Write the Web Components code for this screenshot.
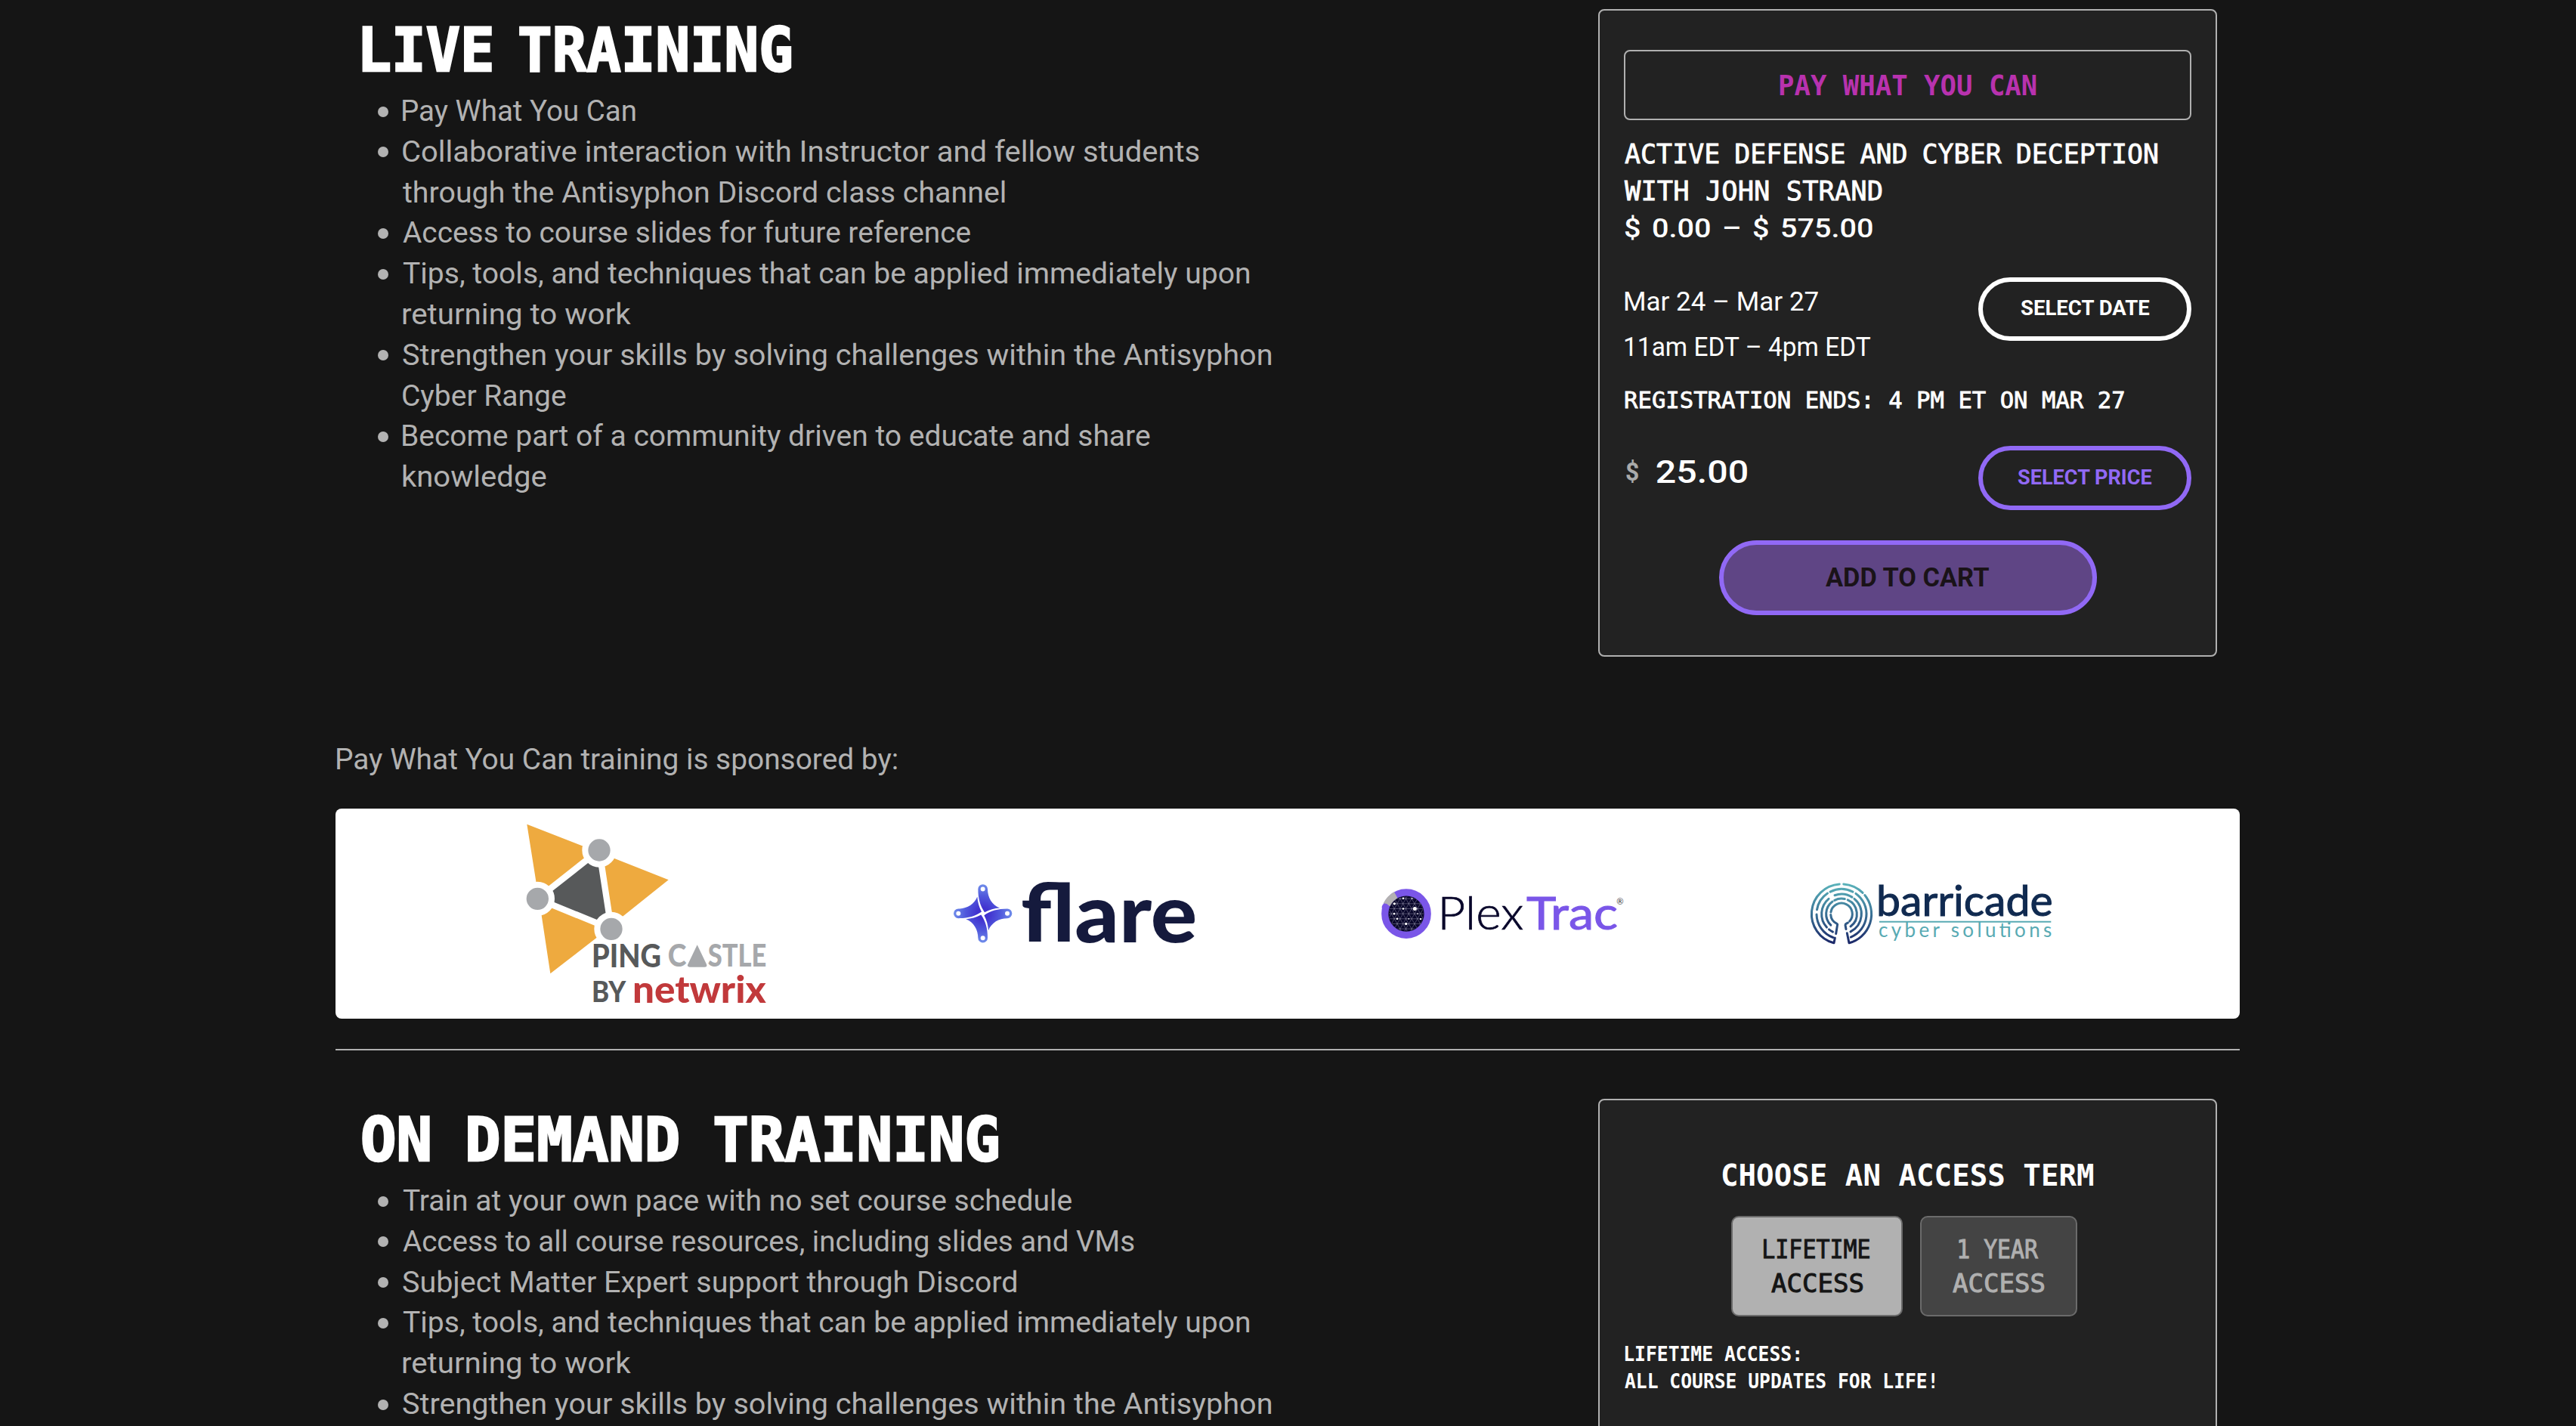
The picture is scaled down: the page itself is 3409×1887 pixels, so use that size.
<!DOCTYPE html>
<html lang="en">
<head>
<meta charset="utf-8">
<title>Active Defense and Cyber Deception</title>
<style>
  html, body { margin: 0; background: #151515; }
  body { height: 1887px; overflow: hidden; font-family: Roboto, "Liberation Sans", sans-serif; color: #b2b2b2; }
</style>
</head>
<body>
<training-page></training-page>

<script>
const FACES = {
  mono: { family: '"DejaVu Sans Mono", "Liberation Mono", monospace', cap: 0.729 },
  body: { family: 'Roboto, "Liberation Sans", sans-serif', cap: 0.711 }
};
const pen = document.createElement('canvas').getContext('2d');

/* One line of text set to an exact cap height and ink width. */
class FitText extends HTMLElement {
  connectedCallback() {
    const get = (n, d) => this.getAttribute(n) ?? d;
    const face = FACES[get('face', 'body')];
    const size = +get('cap', 27) / face.cap;
    const weight = get('weight', 400);
    const width = +get('w', 100);
    const text = this.textContent.trim();
    const gap = +get('gap', 0) * size;
    const spaces = text.split(' ').length - 1;
    pen.font = `${weight} ${size}px ${face.family}`;
    const m = pen.measureText(text);
    const scale = width / (m.actualBoundingBoxLeft + m.actualBoundingBoxRight + gap * spaces);
    const shift = m.actualBoundingBoxLeft * scale;
    this.attachShadow({ mode: 'open' }).innerHTML = `
      <style>
        :host { display: block; flex: none; width: ${width}px; height: ${get('h', 54)}px; line-height: ${get('h', 54)}px; }
        span { display: inline-block; white-space: pre; font: ${weight} ${size}px/${get('h', 54)}px ${face.family};
          word-spacing: ${gap}px; transform: translate(${shift}px, 1px) scaleX(${scale}); transform-origin: 0 50%; vertical-align: top;
          -webkit-text-stroke: ${get('stroke', 0)}px currentColor; }
      </style><span><slot></slot></span>`;
  }
}
customElements.define('fit-text', FitText);

class PillButton extends HTMLElement {
  connectedCallback() {
    this.attachShadow({ mode: 'open' }).innerHTML = `
      <style>
        :host { display: block; flex: none; }
        button { box-sizing: border-box; width: 100%; height: 100%; margin: 0; padding: 0 0 3px; display: flex; align-items: center; justify-content: center;
          border: 6px solid var(--line, #fff); border-radius: 60px; background: var(--fill, transparent); color: var(--ink, #fff); }
      </style><button><slot></slot></button>`;
  }
}
customElements.define('pill-button', PillButton);

class TermOption extends HTMLElement {
  connectedCallback() {
    this.attachShadow({ mode: 'open' }).innerHTML = `
      <style>
        :host { display: flex; box-sizing: border-box; height: 133px; flex-direction: column; align-items: center; justify-content: center;
          border: 2px solid #6b6b6b; border-radius: 10px; background: #444; color: #b0b0b0; }
        :host([selected]) { background: #b1b1b1; color: #151515; }
      </style><slot></slot>`;
  }
}
customElements.define('term-option', TermOption);

class OfferCard extends HTMLElement {
  connectedCallback() {
    this.attachShadow({ mode: 'open' }).innerHTML = `
      <style>
        :host { display: block; box-sizing: border-box; width: 819px; height: 857px; flex: none; padding: 0 32px;
          border: 2px solid #b0b0b0; border-radius: 8px; background: #222; color: #fff; }
      </style><slot></slot>`;
  }
}
customElements.define('offer-card', OfferCard);

/* Item whose light-DOM lines stack beside a round bullet. */
class BulletItem extends HTMLElement {
  connectedCallback() {
    this.attachShadow({ mode: 'open' }).innerHTML = `
      <style>
        :host { display: flex; color: #b2b2b2; }
        i { flex: none; width: 14px; height: 14px; margin: 20.5px 19px 0 19.5px; border-radius: 50%; background: currentColor; }
      </style><i></i><div><slot></slot></div>`;
  }
}
customElements.define('bullet-item', BulletItem);

class TrainingRow extends HTMLElement {
  connectedCallback() {
    this.attachShadow({ mode: 'open' }).innerHTML = `
      <style>
        :host { display: flex; justify-content: space-between; align-items: flex-start; padding: 0 30px 0 36px; }
        .title { margin-top: 12px; color: #fff; }
        .points { margin-top: 12.1px; }
      </style>
      <div><div class="title"><slot name="title"></slot></div><div class="points"><slot></slot></div></div>
      <slot name="card"></slot>`;
  }
}
customElements.define('training-row', TrainingRow);

class PingcastleLogo extends HTMLElement {
  connectedCallback() {
    this.attachShadow({ mode: 'open' }).innerHTML = `
      <style>:host { display: block; } svg { display: block; overflow: visible; } text { font-family: Lato, sans-serif; }</style>
      <svg width="320" height="278" viewBox="99 0 960 834">
        <g fill="#eeaa3f">
          <path d="M109 62L396 174L396 165L151 358L156 358Z"/>
          <path d="M396 165L396 174L671 283L444 464L444 478Z"/>
          <path d="M151 358L157 358L202 655L444 467L444 478Z"/>
        </g>
        <path d="M396 165L151 358L444 478Z" fill="#57595a" stroke="#fff" stroke-width="25"/>
        <g fill="#a6a8ab" stroke="#fff" stroke-width="24">
          <circle cx="396" cy="165" r="56"/><circle cx="151" cy="358" r="56"/><circle cx="444" cy="478" r="56"/>
        </g>
        <text x="366" y="629" font-size="126" font-weight="900" fill="#57595a" textLength="276" lengthAdjust="spacingAndGlyphs">PING</text>
        <g fill="#a6a8ab" font-size="124" font-weight="900">
          <text x="668" y="628" textLength="74" lengthAdjust="spacingAndGlyphs">C</text>
          <path d="M785 541L822 618Q826 629 815 629H755Q743 629 748 618Z"/>
          <text x="827" y="628" textLength="233" lengthAdjust="spacingAndGlyphs">STLE</text>
        </g>
        <text x="366" y="769" font-size="112" font-weight="900" fill="#57595a" textLength="136" lengthAdjust="spacingAndGlyphs">BY</text>
        <text x="528" y="770" font-size="150" font-weight="900" fill="#c1393b" textLength="530" lengthAdjust="spacingAndGlyphs">netwrix</text>
      </svg>`;
  }
}
customElements.define('pingcastle-logo', PingcastleLogo);

class FlareLogo extends HTMLElement {
  connectedCallback() {
    const arm = [0, 90, 180, 270].map(a => `<g transform="rotate(${a} 179 236)">
      <path d="M160 139A19 19 0 0 1 198 139C198 172 215 202 246 214C226 215 204 221 186 231C168 205 160 176 160 139Z"/>
      <circle cx="179" cy="139" r="9" fill="#fff"/></g>`).join('');
    this.attachShadow({ mode: 'open' }).innerHTML = `
      <style>:host { display: block; } svg { display: block; overflow: visible; } text { font-family: Lato, sans-serif; }</style>
      <svg width="320" height="150" viewBox="60 11.6 960 450">
        <defs><radialGradient id="g" gradientUnits="userSpaceOnUse" cx="179" cy="236" r="115">
          <stop offset=".2" stop-color="#4132cf"/><stop offset=".6" stop-color="#5058dc"/><stop offset="1" stop-color="#6f8cea"/></radialGradient></defs>
        <g fill="url(#g)">${arm}</g>
        <text x="330" y="350" font-size="318" font-weight="900" fill="#151a3d" textLength="700" lengthAdjust="spacingAndGlyphs">flare</text>
      </svg>`;
  }
}
customElements.define('flare-logo', FlareLogo);

class PlextracLogo extends HTMLElement {
  connectedCallback() {
    let mesh = '';
    for (let y = 127; y < 290; y += 20) mesh += `M100 ${y}H260`;
    for (let x = -40; x < 400; x += 23) mesh += `M${x} 287L${x + 92} 127M${x} 127L${x + 92} 287`;
    const dots = [[133, 167, 5], [168, 146, 4], [214, 187, 7.5], [168, 187, 4], [132, 207, 4], [144, 227, 4], [179, 247, 5], [237, 228, 3.5], [203, 146, 2.5], [225, 207, 2.5], [190, 227, 2.5]];
    this.attachShadow({ mode: 'open' }).innerHTML = `
      <style>:host { display: block; } svg { display: block; overflow: visible; } text { font-family: Lato, sans-serif; }</style>
      <svg width="320" height="140" viewBox="81 -3.4 960 420">
        <defs><clipPath id="c"><circle cx="180" cy="207" r="69"/></clipPath></defs>
        <circle cx="180" cy="207" r="84" fill="none" stroke="#7a56e8" stroke-width="29"/>
        <path d="M103 171A85 85 0 0 1 139 133" fill="none" stroke="#b3b1b2" stroke-width="29"/>
        <circle cx="97" cy="181" r="14" fill="#7a56e8"/>
        <circle cx="180" cy="207" r="71" fill="#08062a"/>
        <g clip-path="url(#c)"><path d="${mesh}" stroke="#d8d6e8" stroke-width="1" fill="none"/>
        ${dots.map(d => `<circle cx="${d[0]}" cy="${d[1]}" r="${d[2]}" fill="#fff"/>`).join('')}</g>
        <text x="304" y="271" font-size="181" font-weight="300" fill="#08062a" stroke="#08062a" stroke-width="2" textLength="342" lengthAdjust="spacingAndGlyphs">Plex</text>
        <text x="657" y="271" font-size="181" font-weight="400" fill="#7a56e8" stroke="#7a56e8" stroke-width="3" textLength="363" lengthAdjust="spacingAndGlyphs">Trac</text>
        <text x="1015" y="170" font-size="34" fill="#333" textLength="28" lengthAdjust="spacingAndGlyphs">®</text>
      </svg>`;
  }
}
customElements.define('plextrac-logo', PlextracLogo);

class BarricadeLogo extends HTMLElement {
  connectedCallback() {
    const at = (r, a) => [198 + r * Math.sin(a * Math.PI / 180), 208 - r * Math.cos(a * Math.PI / 180)].map(n => n.toFixed(1)).join(' ');
    const arcs = [
      [119, -165, -4], [119, 4, 45], [119, 51, 165],
      [99, -160, -91], [99, -80, -34], [99, -27, 27], [99, 35, 158],
      [79, -154, -141], [79, -132, -40], [79, -20, 32], [79, 40, 153],
      [61, -136, -36], [61, -27, 12], [61, 24, 144],
      [43, -155, -94], [43, -80, 132], [43, 144, 158]
    ].map(([r, a, b]) => `M${at(r, a)}A${r} ${r} 0 ${b - a > 180 ? 1 : 0} 1 ${at(r, b)}`).join('');
    this.attachShadow({ mode: 'open' }).innerHTML = `
      <style>:host { display: block; } svg { display: block; overflow: visible; } text { font-family: Lato, sans-serif; }</style>
      <svg width="320" height="140" viewBox="72 -3.4 960 420">
        <defs><linearGradient id="g" gradientUnits="userSpaceOnUse" x1="0" y1="85" x2="0" y2="325">
          <stop offset="0" stop-color="#5bb4bb"/><stop offset=".5" stop-color="#3a7396"/><stop offset="1" stop-color="#1b2768"/></linearGradient></defs>
        <path d="${arcs}M182 249L176 286M172 303L168 323M213 252L216 268M220 284L228 323" fill="none" stroke="url(#g)" stroke-width="9" stroke-linecap="round"/>
        <text x="336" y="215" font-size="166" font-weight="400" fill="#102a50" stroke="#102a50" stroke-width="3" textLength="701" lengthAdjust="spacingAndGlyphs">barricade</text>
        <path d="M348 239H1030" stroke="#58aab3" stroke-width="6"/>
        <text x="345" y="299" font-size="78" font-weight="400" fill="#58aab3" textLength="688" lengthAdjust="spacing">cyber solutions</text>
      </svg>`;
  }
}
customElements.define('barricade-logo', BarricadeLogo);

class SponsorPanel extends HTMLElement {
  connectedCallback() {
    this.attachShadow({ mode: 'open' }).innerHTML = `
      <style>:host { display: flex; align-items: center; justify-content: center; gap: 247px; height: 278px; border-radius: 8px; background: #fff; }</style>
      <slot></slot>`;
  }
}
customElements.define('sponsor-panel', SponsorPanel);

class TrainingPage extends HTMLElement {
  connectedCallback() {
    const item = (...lines) => `<bullet-item>${lines.map(([t, w]) => `<fit-text h="53.8" cap="27" w="${w}">${t}</fit-text>`).join('')}</bullet-item>`;
    const tips = item(['Tips, tools, and techniques that can be applied immediately upon', 1120.5], ['returning to work', 302.5]);
    const range = item(['Strengthen your skills by solving challenges within the Antisyphon', 1149.5], ['Cyber Range', 215.5]);
    this.attachShadow({ mode: 'open' }).innerHTML = `
      <style>
        :host { display: block; width: 2520px; margin-left: 444px; padding-top: 12px; }
        .banner { display: flex; align-items: center; justify-content: center; box-sizing: border-box; height: 93px; margin-top: 52px; border: 2px solid #b0b0b0; border-radius: 8px; color: #b832ae; }
        .name { margin: 20px 0 0 1px; }
        .line { display: flex; justify-content: space-between; align-items: flex-start; }
        .dates { margin-top: 40.5px; height: 122px; }
        .dates div { margin: 1px 0 0 1px; }
        .ends { margin: 15px 0 1px 2px; }
        .price { margin-top: 37px; height: 85px; }
        .amount { display: flex; gap: 24px; margin: 4px 0 0 3px; }
        .amount fit-text:first-child { color: #aaa; }
        .side { width: 282px; height: 84px; }
        .violet { --line: #9169f5; --ink: #9169f5; height: 85px; }
        .cart { width: 500px; height: 99px; margin: 40px auto 0; --line: #9169f5; --fill: #5f4585; --ink: #1a1318; }
        .sponsored { margin: 108px 0 39px 2px; }
        hr { height: 2px; margin: 40px 0 64px; border: 0; background: #b0b0b0; }
        .choose { display: flex; justify-content: center; margin-top: 68.7px; }
        .terms { display: flex; justify-content: center; gap: 23px; margin: 24.3px 10px 31px 0; }
        .terms term-option:first-child { width: 227px; }
        .terms term-option:last-child { width: 208px; }
        .note { margin-left: 1px; }
      </style>
      <training-row>
        <fit-text slot="title" face="mono" weight="700" cap="58" h="84" w="566" stroke="2.5" gap="-.2">LIVE TRAINING</fit-text>
        ${item(['Pay What You Can', 308])}
        ${item(['Collaborative interaction with Instructor and fellow students', 1053.5], ['through the Antisyphon Discord class channel', 797])}
        ${item(['Access to course slides for future reference', 751])}
        ${tips}${range}
        ${item(['Become part of a community driven to educate and share', 988.5], ['knowledge', 189.5])}
        <offer-card slot="card">
          <div class="banner"><fit-text face="mono" weight="700" cap="27" h="50" w="340">PAY WHAT YOU CAN</fit-text></div>
          <div class="name">
            <fit-text face="mono" cap="25.5" h="49" w="705" stroke=".8" gap="-.06">ACTIVE DEFENSE AND CYBER DECEPTION</fit-text>
            <fit-text face="mono" cap="25.5" h="49" w="340" stroke=".8">WITH JOHN STRAND</fit-text>
            <fit-text weight="500" cap="25.5" h="49" w="328" gap=".12">$ 0.00 – $ 575.00</fit-text>
          </div>
          <div class="line dates">
            <div><fit-text cap="24.3" h="60" w="256">Mar 24 – Mar 27</fit-text><fit-text cap="24.3" h="60" w="326">11am EDT – 4pm EDT</fit-text></div>
            <pill-button class="side"><fit-text weight="700" cap="19.5" h="40" w="171">SELECT DATE</fit-text></pill-button>
          </div>
          <fit-text class="ends" face="mono" cap="22.5" h="49" w="660" stroke=".8">REGISTRATION ENDS: 4 PM ET ON MAR 27</fit-text>
          <div class="line price">
            <div class="amount"><fit-text weight="700" cap="24" h="60" w="16">$</fit-text><fit-text weight="500" cap="30" h="60" w="120">25.00</fit-text></div>
            <pill-button class="side violet"><fit-text weight="700" cap="19.5" h="40" w="178">SELECT PRICE</fit-text></pill-button>
          </div>
          <pill-button class="cart"><fit-text weight="700" cap="24.5" h="50" w="217">ADD TO CART</fit-text></pill-button>
        </offer-card>
      </training-row>
      <fit-text class="sponsored" cap="27" h="54" w="741">Pay What You Can training is sponsored by:</fit-text>
      <sponsor-panel><pingcastle-logo></pingcastle-logo><flare-logo></flare-logo><plextrac-logo></plextrac-logo><barricade-logo></barricade-logo></sponsor-panel>
      <hr>
      <training-row>
        <fit-text slot="title" face="mono" weight="700" cap="58" h="84" w="840" stroke="2.5" gap="-.06">ON DEMAND TRAINING</fit-text>
        ${item(['Train at your own pace with no set course schedule', 885])}
        ${item(['Access to all course resources, including slides and VMs', 967.5])}
        ${item(['Subject Matter Expert support through Discord', 812])}
        ${tips}
        ${item(['Strengthen your skills by solving challenges within the Antisyphon', 1149.5])}
        <offer-card slot="card">
          <div class="choose"><fit-text face="mono" weight="700" cap="28.5" h="60" w="491">CHOOSE AN ACCESS TERM</fit-text></div>
          <div class="terms">
            <term-option selected><fit-text face="mono" cap="24" h="45" w="140" stroke="1">LIFETIME</fit-text><fit-text face="mono" cap="24" h="45" w="121" stroke="1">ACCESS</fit-text></term-option>
            <term-option><fit-text face="mono" cap="24" h="45" w="105" stroke="1">1 YEAR</fit-text><fit-text face="mono" cap="24" h="45" w="121" stroke="1">ACCESS</fit-text></term-option>
          </div>
          <fit-text class="note" face="mono" weight="700" cap="19.3" h="36.4" w="231.5">LIFETIME ACCESS:</fit-text>
          <fit-text class="note" face="mono" weight="700" cap="19.3" h="36.4" w="410">ALL COURSE UPDATES FOR LIFE!</fit-text>
        </offer-card>
      </training-row>`;
  }
}
customElements.define('training-page', TrainingPage);
</script>
</body>
</html>
